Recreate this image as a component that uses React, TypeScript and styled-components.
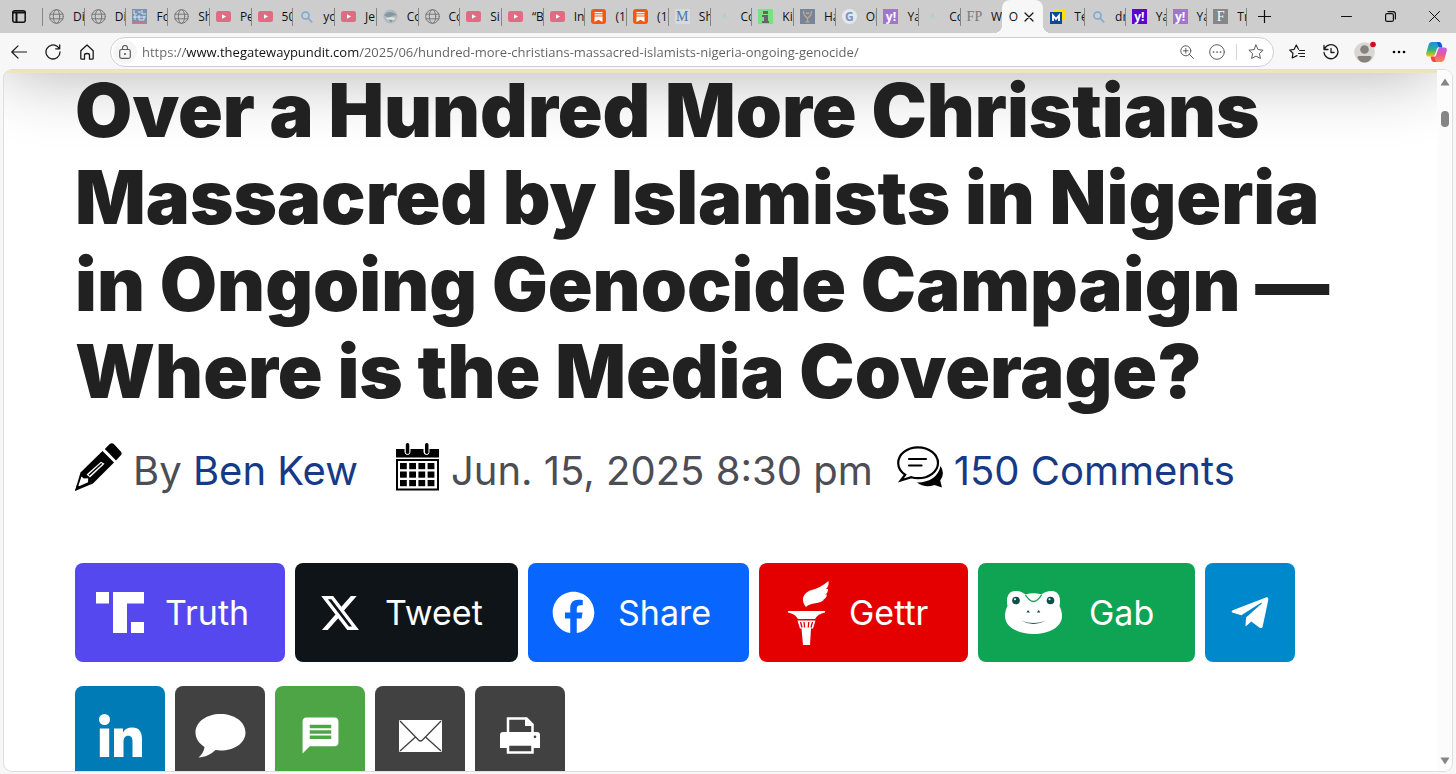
import React from 'react';
import styled, { createGlobalStyle, css } from 'styled-components';
import { FaXTwitter } from 'react-icons/fa6';
import { FaFacebook, FaTelegramPlane } from 'react-icons/fa';
import { MdMessage } from 'react-icons/md';

const GlobalStyle = createGlobalStyle`
  *, *::before, *::after { box-sizing: border-box; }
  body { margin: 0; background: #f7f7f7; }
  button { font: inherit; color: inherit; border: 0; padding: 0; background: none; cursor: pointer; }
  a { text-decoration: none; }
  svg { display: block; flex: none; }
`;

const uiFont = css`
  font-family: 'Open Sans', 'Noto Sans', sans-serif;
`;

const Window = styled.div`
  height: 100vh;
  display: flex;
  flex-direction: column;
  overflow: hidden;
`;

/* ---------- tab strip ---------- */

const TabBar = styled.header`
  ${uiFont}
  display: flex;
  align-items: stretch;
  flex: none;
  height: 33px;
  background: #cdcdcd;
  color: #111;
  font-size: 12px;
`;

const BarButton = styled.button<{ $width: number }>`
  flex: none;
  width: ${(p) => p.$width}px;
  display: flex;
  align-items: center;
  justify-content: center;
`;

const TabList = styled.div`
  flex: 1;
  min-width: 0;
  display: grid;
  grid-template-columns: repeat(24, minmax(0, 42fr)) repeat(5, minmax(0, 41fr));
  align-items: center;
`;

const Tab = styled.button<{ $plain?: boolean }>`
  height: 18px;
  display: flex;
  align-items: center;
  gap: 9px;
  padding-left: 6px;
  overflow: hidden;
  white-space: nowrap;
  border-left: 1px solid ${(p) => (p.$plain ? 'transparent' : '#858585')};
  &:last-child { border-right: 1px solid #858585; }
`;

const ActiveTab = styled.div`
  position: relative;
  align-self: stretch;
  display: flex;
  align-items: center;
  justify-content: space-between;
  padding: 0 9px 0 7px;
  background: #f7f7f7;
  border-radius: 8px 8px 0 0;
  &::before, &::after {
    content: '';
    position: absolute;
    bottom: 0;
    width: 8px;
    height: 8px;
  }
  &::before { right: 100%; background: radial-gradient(circle at 0 0, transparent 8px, #f7f7f7 8px); }
  &::after { left: 100%; background: radial-gradient(circle at 100% 0, transparent 8px, #f7f7f7 8px); }
`;

const Spacer = styled.div<{ $width: number }>`
  flex: none;
  width: ${(p) => p.$width}px;
`;

const Letter = styled.span<{ $bg: string; $fg: string; $round?: boolean; $serif?: boolean }>`
  flex: none;
  width: 15px;
  height: 15px;
  display: flex;
  align-items: center;
  justify-content: center;
  background: ${(p) => p.$bg};
  color: ${(p) => p.$fg};
  border-radius: ${(p) => (p.$round ? '50%' : '0')};
  font: ${(p) => (p.$serif ? "14px/15px 'Liberation Serif', serif" : "bold 12px/15px 'Open Sans', sans-serif")};
`;

const line = { fill: 'none', stroke: 'currentColor', strokeLinecap: 'round', strokeLinejoin: 'round' } as const;

const Globe = () => (
  <svg width="15" height="15" viewBox="0 0 15 15" {...line} stroke="#777">
    <circle cx="7.5" cy="7.5" r="6.8" />
    <ellipse cx="7.5" cy="7.5" rx="3.2" ry="6.8" />
    <path d="M1 5.2h13M1 9.8h13" />
  </svg>
);
const YouTube = () => (
  <svg width="15" height="15" viewBox="0 0 15 15">
    <rect y="2" width="15" height="11" rx="2.5" fill="#e06c84" />
    <path d="M6 5.2v4.6l4-2.3z" fill="#fff" />
  </svg>
);
const Search = () => (
  <svg width="15" height="15" viewBox="0 0 15 15" {...line} stroke="#76a5d6" strokeWidth="1.5">
    <circle cx="6.5" cy="6.5" r="3.6" />
    <path d="M9.2 9.2l3.6 3.8" />
  </svg>
);
const Substack = () => (
  <svg width="15" height="15" viewBox="0 0 15 15">
    <rect width="15" height="15" rx="3" fill="#f4570f" />
    <path d="M3.5 3h8v1.3h-8zM3.5 5.2h8v1.3h-8zM3.5 7.4h8V13l-4-2.3-4 2.3z" fill="#fff" />
  </svg>
);
const Poster = () => (
  <svg width="15" height="15" viewBox="0 0 15 15">
    <rect width="15" height="15" fill="#7893b4" />
    <path d="M2 1v4h3M6 3h3M10 1v4h4M1 8h13M3 6v5M7 6v5h5V7" fill="none" stroke="#dfe5ec" />
    <rect y="13" width="15" height="2" fill="#c07c86" />
  </svg>
);
const Bird = () => (
  <svg width="15" height="15" viewBox="0 0 15 15">
    <circle cx="7.5" cy="7.5" r="7" fill="#b3babd" />
    <path d="M1 6l4-3 5 .5 4 2.500-5 1-3 2-3-1.500z" fill="#8499a3" />
    <path d="M3 9l5-1 5 1-4 3H6z" fill="#dfe3e3" />
    <path d="M5 10.500l5 .5-2 2.500z" fill="#7b97a3" />
  </svg>
);
const Faint = () => (
  <svg width="15" height="15" viewBox="0 0 15 15">
    <path d="M7.5 3l3 6.500h-2l-1-2.500-1 2.500h-2z" fill="#b8cdd1" />
  </svg>
);
const Person = () => (
  <svg width="15" height="15" viewBox="0 0 15 15">
    <rect width="15" height="15" fill="#7be083" />
    <path d="M5 2h5v3H5zM4 6h6v6h1v2H4v-2h2V8H4z" fill="#666" />
  </svg>
);
const Crest = () => (
  <svg width="15" height="15" viewBox="0 0 15 15">
    <rect width="15" height="15" fill="#77859b" />
    <path d="M3.500 2q0 5 4 7 4-2 4-7M6 3.500q1.500 2 3 0M7.500 9v3.500M5.500 12.800h4" fill="none" stroke="#c0a98e" strokeWidth="1.300" />
  </svg>
);
const BlueM = () => (
  <svg width="15" height="15" viewBox="0 0 15 15">
    <path d="M3 0h12v11h-3V3H3z" fill="#ffe000" />
    <rect y="3" width="12" height="12" fill="#0b4a9b" />
    <path d="M3 12V6.500l3 3.500 3-3.500V12" fill="none" stroke="#fff" strokeWidth="1.800" />
  </svg>
);
const Yahoo = ({ vivid = false }) => <Letter $bg={vivid ? '#5a06cf' : '#a075cf'} $fg="#fff">y!</Letter>;

type TabInfo = [string, React.ReactNode];
const tabsBefore: TabInfo[] = [
  ['Di', <Globe />], ['Di', <Globe />], ['Fo', <Poster />], ['Sh', <Globe />], ['Pe', <YouTube />],
  ['50', <YouTube />], ['yo', <Search />], ['Je', <YouTube />], ['Co', <Bird />], ['Co', <Globe />],
  ['Si', <YouTube />], ['“B', <YouTube />], ['In', <YouTube />], ['(1', <Substack />], ['(1', <Substack />],
  ['Sh', <Letter $bg="#d6dade" $fg="#4f74aa" $serif>M</Letter>], ['Co', <Faint />], ['Ki', <Person />],
  ['Ha', <Crest />], ['Ol', <Letter $bg="#e4e8ee" $fg="#7c93c4" $round>G</Letter>], ['Ya', <Yahoo />],
  ['Co', <Faint />], ['W', <Letter $bg="transparent" $fg="#7a7a7a" $serif>FP</Letter>],
];
const tabsAfter: TabInfo[] = [
  ['Te', <BlueM />], ['dr', <Search />], ['Ya', <Yahoo vivid />], ['Ya', <Yahoo />],
  ['Tr', <Letter $bg="#868686" $fg="#fff" $serif>F</Letter>],
];

/* ---------- toolbar ---------- */

const Toolbar = styled.nav`
  ${uiFont}
  flex: none;
  height: 37px;
  display: flex;
  align-items: center;
  padding-left: 2px;
  background: #f7f7f7;
  color: #1b1b1b;
`;

const AddressBar = styled.div`
  flex: 1;
  min-width: 0;
  height: 30px;
  margin: 0 6px;
  display: flex;
  align-items: center;
  background: #fff;
  border: 1px solid #cfcfcf;
  border-radius: 15px;
  color: #5c5c5c;
`;

const SiteInfo = styled(BarButton)`
  height: 24px;
  margin: 0 5px 0 2px;
  border-radius: 12px;
  background: #f5f5f5;
`;

/* The host part of the address is darker than the scheme and the path. */
const Address = styled.input`
  ${uiFont}
  flex: 1;
  min-width: 0;
  height: 28px;
  padding: 0;
  border: 0;
  outline: 0;
  font-size: 13px;
  color: transparent;
  background: linear-gradient(90deg, #666 43px, #111 43px, #111 217px, #5f5f5f 217px);
  -webkit-background-clip: text;
  background-clip: text;
`;

const Divider = styled.span`
  width: 1px;
  height: 16px;
  margin: 0 2px 0 4px;
  background: #d5d5d5;
`;

/* ---------- page ---------- */

const Viewport = styled.div`
  flex: 1;
  min-height: 0;
  display: flex;
  margin: 0 4px 3px;
  overflow: hidden;
  background: #fff;
  border-radius: 8px;
  box-shadow: 0 0 0 1px #dedede;
`;

const Page = styled.main`
  position: relative;
  flex: 1;
  min-width: 0;
  overflow: hidden;
  padding: 0 72px 0 71px;
  border-top: 3px solid #efe4bb;
  font-family: Inter, 'Liberation Sans', sans-serif;
  &::before {
    content: '';
    position: absolute;
    left: 0;
    right: 0;
    bottom: 100%;
    height: 120px;
    box-shadow: 0 0 70px rgba(0, 0, 0, 0.32);
  }
`;

const Headline = styled.h1`
  position: relative;
  margin: -6px 0 0;
  font-size: 74px;
  line-height: 87px;
  font-weight: 900;
  color: #212121;
  white-space: nowrap;
`;

const Line = styled.span`
  display: block;
`;

const Meta = styled.div`
  display: flex;
  align-items: center;
  height: 60px;
  margin-top: 25px;
  font-size: 40px;
  font-weight: 400;
  color: #4d4d55;
  white-space: nowrap;
`;

const MetaItem = styled.div<{ $gap: number; $after: number }>`
  display: flex;
  align-items: center;
  gap: ${(p) => p.$gap}px;
  margin-right: ${(p) => p.$after}px;
  svg { margin-bottom: 6px; }
`;

const MetaLink = styled.a`
  color: #163a85;
`;

const ShareRow = styled.div`
  display: flex;
  flex-wrap: wrap;
  gap: 24px 10px;
  margin-top: 63px;
`;

const ShareButton = styled.button<{ $bg: string; $width?: number }>`
  width: ${(p) => p.$width ?? 90}px;
  height: 99px;
  display: flex;
  align-items: center;
  justify-content: ${(p) => (p.$width ? 'flex-start' : 'center')};
  border-radius: 8px;
  background: ${(p) => p.$bg};
  color: #fff;
  font-size: 34px;
`;

const IconSlot = styled.span<{ $width?: number }>`
  flex: none;
  width: ${(p) => p.$width ?? 90}px;
  display: flex;
  justify-content: center;
`;

const Scrollbar = styled.div`
  flex: none;
  width: 15px;
  display: flex;
  flex-direction: column;
  align-items: center;
  padding: 8px 0 6px;
  background: #fcfcfc;
`;

const Thumb = styled.div`
  width: 8px;
  height: 16px;
  margin: 25px 0 auto;
  border-radius: 4px;
  background: #858585;
`;

const Pencil = () => (
  <svg width="47" height="48" viewBox="0 0 47 48">
    <path d="M35 .8Q37-.6 38.800 1l7 7.500q1.600 2 0 3.800L41 17.500 29.800 6z" />
    <path d="M27.500 8 39 19.500 18 40.500 0 48 5.500 29.500z" />
    <path d="M6.500 33.500 3 43.800l10-4.500.2-4-4.500.2z" fill="#fff" />
    <path d="M11.500 31.500 26 18.800l3.500 2L15 34.500z" fill="#fff" />
    <path d="M14 32.300 26.800 20.500" stroke="#000" strokeWidth="1.500" />
    <path d="M2 41.500 5.500 44.500 0 48z" />
  </svg>
);
const Calendar = () => (
  <svg width="43" height="48" viewBox="0 0 43 48">
    <path d="M0 6h43v8.500H0z" />
    <path d="M9 4v5a2.500 2.500 0 0 0 5 0V4M28 4v5a2.500 2.500 0 0 0 5 0V4" fill="#fff" stroke="#fff" />
    <rect x="9.800" width="3.500" height="11" rx="1.700" />
    <rect x="29" width="3.500" height="11" rx="1.700" />
    <path d="M1 17h41v29.500H1z" fill="none" stroke="#000" strokeWidth="2" />
    {[20, 28.5, 37].map((y) =>
      [4, 13.2, 22.4, 31.6].map((x) => <rect key={`${x}-${y}`} x={x} y={y} width="6.800" height="6.200" />)
    )}
  </svg>
);
const Bubbles = () => (
  <svg width="48" height="42" viewBox="0 0 48 42">
    <path d="M43.500 20q5 7-.3 14.500L45 41.500 37.500 39Q28 42.500 20 36.500 40 36 43.500 20z" />
    <path d="M21 1.300C10 1.300 1.200 8 1.200 17c0 5 2.800 9 7 11.700L3.800 34.500l10.500-3.300c2 .6 4.400 1 6.700 1C32 32.200 41 25.500 41 17S32 1.300 21 1.300z" fill="#fff" stroke="#000" strokeWidth="2.200" />
    <path d="M12 13h17M12 19.500h12.500" stroke="#000" strokeWidth="2.200" strokeLinecap="round" />
  </svg>
);
const Truth = () => (
  <svg width="48" height="41" viewBox="0 0 48 41" fill="currentColor">
    <path d="M0 0h13v11.500H0zM17 0h31v11.500H31V41H17zM35 30h13v11H35z" />
  </svg>
);
const Torch = () => (
  <svg width="49" height="64" viewBox="-8 0 49 64" fill="currentColor">
    <path d="M18 26C13 20 14 13 22 9.500 29 7.500 35 5 40.500 0 41 4 40 6 38 8h2c0 3-1 4.500-3 5.500h2c-.5 3-2 4.500-4 5h1C33 23.500 22 21 18 26z" />
    <path d="M0 30h37v1.500c-5 1-8 3-10 6.500H10C8 34.500 5 32.500 0 31.500z" />
    <path d="M9.500 39.500h18l-2.500 8h-2L22 64h-7l-1.500-16.500H12z" />
    <path d="M12.500 41l1.500 5.500M16 41l.6 5.500M20.800 41l-.6 5.500M24.500 41 23 46.500" stroke="#e50000" strokeWidth="1.300" />
  </svg>
);
const Frog = () => (
  <svg width="57" height="43" viewBox="0 0 57 43">
    <path d="M10 0c5 0 8 1.500 10.500 3.500Q28.500 1 36.500 3.500C39 1.500 42 0 47 0c6 0 9.500 6 7.500 15C56 18 57 21 57 25c0 11-13 18-28.500 18S0 36 0 25c0-4 1-7 2.500-10C.5 6 4 0 10 0z" fill="#fff" />
    <path d="M20.500 4q4 6.500 8 6.500t8-6.500" fill="none" stroke="#0fa453" strokeWidth="1.400" />
    <circle cx="11" cy="9.500" r="3.800" fill="#0d5048" />
    <circle cx="45.500" cy="9.500" r="3.800" fill="#0d5048" />
    <circle cx="10" cy="8.200" r="1" fill="#fff" />
    <circle cx="44.500" cy="8.200" r="1" fill="#fff" />
    <path d="M21.500 21.500l1.500-2.500 2 2.500zM31.800 21.500l2-2.500 1.500 2.500z" fill="#0d5048" />
    <path d="M16 29.500q12.500 5 25 0-12.500 7-25 0z" fill="#0d5048" />
  </svg>
);
const LinkedIn = () => (
  <svg width="43" height="43" viewBox="0 0 43 43" fill="currentColor">
    <circle cx="5.500" cy="5.500" r="5.500" />
    <path d="M.8 14.500h9.400V43H.8zM15 14.500h9v4c1.800-3.200 4.800-5 9-5 7.500 0 10 4.500 10 12V43h-9.500V28c0-4.200-1-6.300-4.300-6.300S24.500 24 24.500 28v15H15z" />
  </svg>
);
const SpeechBubble = () => (
  <svg width="51" height="44" viewBox="0 0 51 44" fill="currentColor">
    <path d="M25.500 0C39.500 0 50.500 8 50.500 18.500S39.500 36.500 25.500 36.500q-2.500 0-5-.4C16 40.500 10 43.500 3.500 43.500c3-2.500 5.500-6 6-10.500C4 29.500.5 24.500.5 18.500.5 8 11.500 0 25.500 0z" />
  </svg>
);
const Envelope = () => (
  <svg width="43" height="32" viewBox="0 0 43 32">
    <rect width="43" height="32" rx="1" fill="#fff" />
    <path d="M1 1l18.500 19q2 2 4 0L42 1M1 31l15.500-14M42 31 26.500 17" fill="none" stroke="#414141" strokeWidth="1.300" />
  </svg>
);
const Printer = () => (
  <svg width="40" height="37" viewBox="0 0 40 37">
    <path d="M8 16V1.500h18.500l6 6V16" fill="none" stroke="#fff" strokeWidth="2.500" />
    <path d="M25 1v8h8z" fill="#fff" />
    <path d="M3 15h34q3 0 3 3v13H0V18q0-3 3-3z" fill="#fff" />
    <path d="M8 27.500h24.500v8H8z" fill="#414141" stroke="#fff" strokeWidth="2.500" />
    <circle cx="35" cy="19.800" r="1.300" fill="#414141" />
  </svg>
);
const Copilot = () => (
  <svg width="21" height="20" viewBox="0 0 21 20">
    <defs>
      <linearGradient id="cpl" x1="0" y1="0" x2="0" y2="1">
        <stop offset="0" stopColor="#1b8df0" /><stop offset=".55" stopColor="#2fb67c" /><stop offset="1" stopColor="#ffc400" />
      </linearGradient>
      <linearGradient id="cpr" x1="0" y1="0" x2="0" y2="1">
        <stop offset="0" stopColor="#b260f0" /><stop offset=".5" stopColor="#f0559a" /><stop offset="1" stopColor="#ff8a3c" />
      </linearGradient>
    </defs>
    <path d="M6 0h7q2 0 2.700 2l.8 3h-3q-2 0-2.700 2L9 12.500Q8.300 14.500 6.500 14.500H3Q-.5 14.500.3 11L2.500 3Q3.300 0 6 0z" fill="url(#cpl)" />
    <path d="M15 20H8q-2 0-2.700-2l-.8-3h2.500q2.500 0 3.200-2l1.800-5.500q.7-2 2.500-2H18q3.500 0 2.700 3.500L18.500 17q-.8 3-3.500 3z" fill="url(#cpr)" />
    <path d="M12.500 0q2 0 2.700 2l1 3.500H13L11 0z" fill="#1c52d6" />
    <path d="M8.500 20q-2 0-2.700-2l-1-3.500H8L10 20z" fill="#f0443c" />
  </svg>
);

const starPath = 'M8 1l2.100 4.600 5 .6-3.700 3.400 1 4.900L8 12.100l-4.400 2.400 1-4.900L.9 6.200l5-.6z';
const url =
  'https://www.thegatewaypundit.com/2025/06/hundred-more-christians-massacred-islamists-nigeria-ongoing-genocide/';

export default function App() {
  return (
    <Window>
      <GlobalStyle />
      <TabBar>
        <BarButton $width={38} aria-label="Tab actions">
          <svg width="14" height="13" viewBox="0 0 14 13" {...line} strokeWidth="1.500">
            <rect x=".8" y=".8" width="12.400" height="11.400" rx="2" />
            <path d="M1 2.500h12M4.500 4v8" strokeWidth="2" />
          </svg>
        </BarButton>
        <Spacer $width={4} />
        <TabList>
          {tabsBefore.map(([title, icon], i) => (
            <Tab key={i}>{icon}{title}</Tab>
          ))}
          <ActiveTab>
            <span>O</span>
            <button aria-label="Close tab">
              <svg width="10" height="10" viewBox="0 0 10 10" {...line} strokeWidth="1.200"><path d="M1 1l8 8M9 1 1 9" /></svg>
            </button>
          </ActiveTab>
          {tabsAfter.map(([title, icon], i) => (
            <Tab key={i} $plain={i === 0}>{icon}{title}</Tab>
          ))}
        </TabList>
        <BarButton $width={34} aria-label="New tab">
          <svg width="13" height="13" viewBox="0 0 13 13" {...line} strokeWidth="1.200"><path d="M6.500 0v13M0 6.500h13" /></svg>
        </BarButton>
        <Spacer $width={43} />
        <BarButton $width={44} aria-label="Minimize">
          <svg width="11" height="11" viewBox="0 0 11 11" {...line}><path d="M.5 5.500h10" /></svg>
        </BarButton>
        <BarButton $width={44} aria-label="Restore">
          <svg width="11" height="11" viewBox="0 0 11 11" {...line} strokeWidth="1.200">
            <rect x=".6" y="2.600" width="7.800" height="7.800" rx="1.500" />
            <path d="M3 .6h5q2.400 0 2.400 2.400v5" />
          </svg>
        </BarButton>
        <BarButton $width={44} aria-label="Close">
          <svg width="11" height="11" viewBox="0 0 11 11" {...line}><path d="M.5.5l10 10M10.500.5l-10 10" /></svg>
        </BarButton>
      </TabBar>

      <Toolbar>
        <BarButton $width={34} aria-label="Back">
          <svg width="16" height="14" viewBox="0 0 16 14" {...line} strokeWidth="1.200"><path d="M15.500 7H1M7 .8.800 7 7 13.200" /></svg>
        </BarButton>
        <BarButton $width={34} aria-label="Refresh">
          <svg width="16" height="16" viewBox="0 0 16 16" {...line} strokeWidth="1.300"><path d="M15 8A7 7 0 1 1 12.500 2.600L14.500 4.500M14.700.8v4h-4" /></svg>
        </BarButton>
        <BarButton $width={34} aria-label="Home">
          <svg width="14" height="16" viewBox="0 0 14 16" {...line} strokeWidth="1.300">
            <path d="M.8 6.800 7 1l6.200 5.800v7.400q0 1-1 1H9.500v-4q0-1.700-2.500-1.700t-2.500 1.700v4H1.800q-1 0-1-1z" />
          </svg>
        </BarButton>
        <AddressBar>
          <SiteInfo $width={24} aria-label="Site information">
            <svg width="12" height="14" viewBox="0 0 12 14" {...line} strokeWidth="1.200">
              <rect x=".7" y="4.500" width="10.600" height="8.800" rx="1.800" />
              <path d="M3.500 4.500V3a2.500 2.500 0 0 1 5 0v1.500" />
              <circle cx="6" cy="9" r=".5" />
            </svg>
          </SiteInfo>
          <Address aria-label="Address" defaultValue={url} spellCheck={false} />
          <BarButton $width={30} aria-label="Zoom">
            <svg width="14" height="14" viewBox="0 0 14 14" {...line}><circle cx="5.800" cy="5.800" r="5" /><path d="M9.500 9.500l4 4M5.800 3.500v4.600M3.500 5.800h4.600" /></svg>
          </BarButton>
          <BarButton $width={30} aria-label="More page actions">
            <svg width="16" height="16" viewBox="0 0 16 16" {...line}><circle cx="8" cy="8" r="7.300" /><path d="M4.500 8h.1M8 8h.1M11.500 8h.1" strokeWidth="1.700" /></svg>
          </BarButton>
          <Divider />
          <BarButton $width={34} aria-label="Add to favorites">
            <svg width="16" height="16" viewBox="0 0 16 16" {...line}><path d={starPath} /></svg>
          </BarButton>
        </AddressBar>
        <BarButton $width={34} aria-label="Favorites">
          <svg width="16" height="16" viewBox="0 0 16 16" {...line} strokeWidth="1.200">
            <path d="M9.500 5.200 7.300 1 5.200 5.300.7 6l3.300 3.200-.8 4.800L8 11.600M10.500 6.500h5M9.500 9.500h6M11 12.500h4.500" />
          </svg>
        </BarButton>
        <BarButton $width={34} aria-label="History">
          <svg width="16" height="16" viewBox="0 0 16 16" {...line} strokeWidth="1.300"><path d="M1.500 5A7 7 0 1 1 1 8.500M1 1.500v4h4M8 4.500v4h3" /></svg>
        </BarButton>
        <BarButton $width={34} aria-label="Profile">
          <svg width="22" height="22" viewBox="0 0 22 22">
            <circle cx="10.500" cy="11.500" r="10.300" fill="#d9d7d4" />
            <circle cx="10.500" cy="8.500" r="4.300" fill="#85817d" />
            <path d="M3.500 16.500q0-1.500 1.500-1.500h11q1.500 0 1.500 1.500-2 5-7 5t-7-5z" fill="#85817d" />
            <circle cx="19" cy="3.500" r="2.800" fill="#d40b13" />
          </svg>
        </BarButton>
        <BarButton $width={34} aria-label="Settings and more">
          <svg width="14" height="4" viewBox="0 0 14 4"><circle cx="2" cy="2" r="1.300" /><circle cx="7" cy="2" r="1.300" /><circle cx="12" cy="2" r="1.300" /></svg>
        </BarButton>
        <BarButton $width={40} aria-label="Copilot"><Copilot /></BarButton>
      </Toolbar>

      <Viewport>
        <Page>
          <Headline>
            <Line>Over a Hundred More Christians</Line>
            <Line>Massacred by Islamists in Nigeria</Line>
            <Line>in Ongoing Genocide Campaign —</Line>
            <Line>Where is the Media Coverage?</Line>
          </Headline>
          <Meta>
            <MetaItem $gap={11} $after={38}>
              <Pencil />
              <span>By <MetaLink href="#author">Ben Kew</MetaLink></span>
            </MetaItem>
            <MetaItem $gap={12} $after={24}>
              <Calendar />
              <span>Jun. 15, 2025 8:30 pm</span>
            </MetaItem>
            <MetaItem $gap={9} $after={0}>
              <Bubbles />
              <MetaLink href="#comments">150 Comments</MetaLink>
            </MetaItem>
          </Meta>
          <ShareRow>
            <ShareButton $bg="#5448ee" $width={210}><IconSlot><Truth /></IconSlot>Truth</ShareButton>
            <ShareButton $bg="#0f1419" $width={223}><IconSlot><FaXTwitter size={42} /></IconSlot>Tweet</ShareButton>
            <ShareButton $bg="#0866ff" $width={221}><IconSlot><FaFacebook size={43} /></IconSlot>Share</ShareButton>
            <ShareButton $bg="#e50000" $width={209}><IconSlot><Torch /></IconSlot>Gettr</ShareButton>
            <ShareButton $bg="#0fa453" $width={217}><IconSlot $width={111}><Frog /></IconSlot>Gab</ShareButton>
            <ShareButton $bg="#0088cc" aria-label="Telegram"><FaTelegramPlane size={42} /></ShareButton>
            <ShareButton $bg="#007bb6" aria-label="LinkedIn"><LinkedIn /></ShareButton>
            <ShareButton $bg="#414141" aria-label="Comment"><SpeechBubble /></ShareButton>
            <ShareButton $bg="#4ea546" aria-label="SMS"><MdMessage size={43} /></ShareButton>
            <ShareButton $bg="#414141" aria-label="Email"><Envelope /></ShareButton>
            <ShareButton $bg="#414141" aria-label="Print"><Printer /></ShareButton>
          </ShareRow>
        </Page>
        <Scrollbar>
          <svg width="10" height="8" viewBox="0 0 10 8"><path d="M5 .5 9.500 7.500H.5z" fill="#858585" /></svg>
          <Thumb />
          <svg width="10" height="8" viewBox="0 0 10 8"><path d="M5 7.500.5.500h9z" fill="#858585" /></svg>
        </Scrollbar>
      </Viewport>
    </Window>
  );
}
